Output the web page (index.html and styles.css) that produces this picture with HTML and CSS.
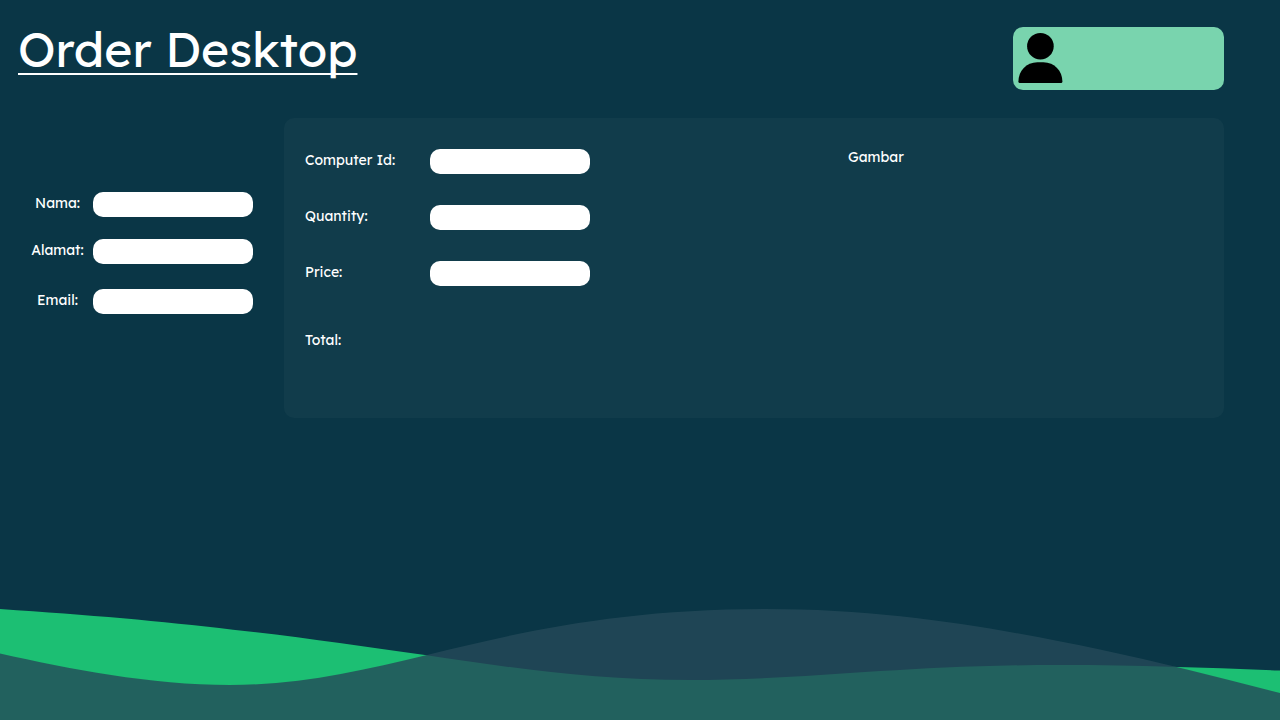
FILE: index.html
```html
<!DOCTYPE html>
<html lang="id">
<head>
<meta charset="utf-8">
<meta name="viewport" content="width=device-width, initial-scale=1">
<title>Order Desktop</title>
<link rel="stylesheet" href="styles.css">
</head>
<body>
<div class="page">
  <header class="header">
    <h1 class="title">Order Desktop</h1>
    <div class="user-card">
      <svg class="user-icon" viewBox="0 0 44 50" aria-hidden="true">
        <circle cx="22.400" cy="13.200" r="13.300"/>
        <path d="M0.400 48.500C0.400 38 8.400 29.200 19.400 29.200H25.400C36.400 29.200 44.400 38 44.400 48.500Q44.400 50 43 50H1.800Q0.400 50 0.400 48.500Z"/>
      </svg>
    </div>
  </header>
  <form class="order">
    <div class="customer">
      <label for="nama">Nama:</label><input class="field" id="nama" type="text">
      <label for="alamat">Alamat:</label><input class="field" id="alamat" type="text">
      <label for="email">Email:</label><input class="field" id="email" type="email">
    </div>
    <section class="panel">
      <div class="details">
        <label for="computer">Computer Id:</label><input class="field" id="computer" type="text">
        <label for="quantity">Quantity:</label><input class="field" id="quantity" type="text">
        <label for="price">Price:</label><input class="field" id="price" type="text">
        <span class="total">Total:</span>
      </div>
      <div class="preview">Gambar</div>
    </section>
  </form>
  <svg class="waves" viewBox="0 0 1280 111" preserveAspectRatio="none" aria-hidden="true">
    <path class="wave-green" d="M0 0C90 6 160 12 233 20.700C300 28 360 37 425 46C510 58.500 590 71 690 71C810 71 900 56 1060 56C1140 56 1210 59 1280 61.500V111H0Z"/>
    <path class="wave-slate" d="M0 44.500C70 60 150 76 230 76C300 76 360 62 427 46C520 23 620 0 765 0C900 0 1010 22 1100 40.500C1160 53 1220 69 1280 84V111H0Z"/>
  </svg>
</div>
</body>
</html>
```
FILE: styles.css
```css
* { box-sizing: border-box; }

body {
  margin: 0;
  background: #0a3646;
  color: #fff;
  font-family: "Lexend Deca", Lexend, Inter, sans-serif;
  font-size: 14px;
  line-height: 22px;
}

.page {
  min-height: 100vh;
  display: flex;
  flex-direction: column;
}

.header {
  display: flex;
  justify-content: space-between;
  align-items: flex-start;
  padding: 19px 56px 0 18px;
}

.title {
  margin: 0;
  font-size: 48px;
  font-weight: 400;
  line-height: 60px;
  text-decoration: underline;
  text-decoration-thickness: 2px;
  text-decoration-skip-ink: none;
  text-underline-offset: 6px;
}

.user-card {
  width: 211px;
  margin-top: 8px;
  padding: 6px 5px 7px;
  border-radius: 10px;
  background: #79d4ae;
}

.user-icon {
  display: block;
  width: 44px;
  height: 50px;
  overflow: visible;
}

.order {
  display: flex;
  align-items: flex-start;
  gap: 31px;
  padding: 28px 56px 28px 24px;
}

.customer {
  display: grid;
  grid-template-columns: 67px 160px;
  grid-template-rows: 47px 50px 25px;
  column-gap: 2px;
  padding-top: 74px;
  text-align: center;
}

.field {
  width: 160px;
  height: 25px;
  padding: 0 10px;
  border: 0;
  border-radius: 10px;
  background: #fff;
  color: #0a3646;
  font: inherit;
}

.panel {
  flex: 1;
  display: flex;
  justify-content: space-between;
  min-height: 300px;
  padding: 31px 21px;
  border-radius: 10px;
  background: #113c4b;
}

.details {
  display: grid;
  grid-template-columns: 125px 160px;
  grid-template-rows: 56px 56px 68px 25px;
}

.preview {
  flex: 0 0 355px;
  margin-top: -3px;
}

.waves {
  display: block;
  width: 100%;
  height: 111px;
  margin-top: auto;
}

.wave-green { fill: #1cbf73; }

.wave-slate {
  fill: #244a59;
  fill-opacity: 0.8;
}
```
